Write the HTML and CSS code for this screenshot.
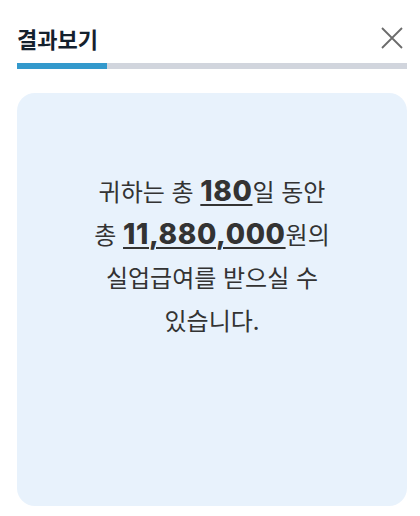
FILE: index.html
```html
<!DOCTYPE html>
<html lang="ko">
<head>
<meta charset="utf-8">
<link rel="stylesheet" href="styles.css">
</head>
<body>
<div class="modal">
  <div class="header">
    <h1 class="title">결과보기</h1>
    <button class="close" aria-label="닫기">
      <svg width="22" height="22" viewBox="0 0 22 22"><path d="M1 1 L21 21 M21 1 L1 21" stroke="#6b6b6b" stroke-width="1.8" fill="none"/></svg>
    </button>
  </div>
  <div class="progress"><div class="bar" style="width:23%"></div></div>
  <div class="card">
    <p class="result">귀하는 총 <span class="num">180</span>일 동안 총 <span class="num">11,880,000</span>원의 실업급여를 받으실 수 있습니다.</p>
  </div>
</div>
</body>
</html>
```
FILE: styles.css
```css
html, body { margin: 0; padding: 0; background: #fff; }
body { font-family: "Noto Sans CJK KR", "Noto Sans", sans-serif; }
.modal { padding: 0 13px 10px 17px; }
.header { display: flex; justify-content: space-between; align-items: center; height: 63px; padding-top: 12px; box-sizing: border-box; }
.title { margin: 0; font-size: 22px; font-weight: 700; color: #14212e; line-height: 1; }
.close { border: 0; background: none; padding: 0; width: 22px; height: 22px; margin-right: 4px; cursor: pointer; }
.close svg { display: block; }
.progress { height: 6px; background: #d1d5dd; }
.bar { height: 100%; background: #3399cc; }
.card { margin-top: 24px; background: #e8f2fc; border-radius: 18px; height: 413px; box-sizing: border-box; padding: 76px 30px 0; }
.result { margin: 0 auto; max-width: 246px; text-align: center; font-size: 24px; line-height: 43px; color: #333; word-break: keep-all; }
.num { font-family: "Inter", sans-serif; font-weight: 800; font-size: 28px; line-height: 1; text-decoration: underline; text-decoration-thickness: 2px; text-underline-offset: 3px; letter-spacing: 0.6px; }
```
